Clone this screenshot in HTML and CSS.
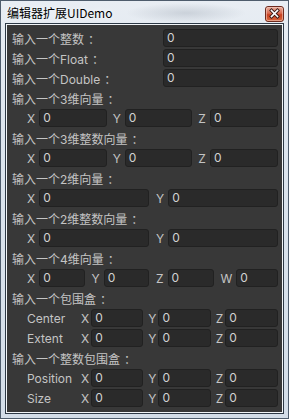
FILE: index.html
```html
<!DOCTYPE html>
<html lang="zh">
<head>
    <meta charset="UTF-8">
    <meta name="viewport" content="width=device-width, initial-scale=1.0">
    <title>编辑器扩展UIDemo</title>
    <link rel="stylesheet" href="styles.css">
</head>
<body>
    <div class="window">
        <!-- Title bar -->
        <div class="titlebar">
            <span class="title">编辑器扩展UIDemo</span>
            <span class="close">
                <svg width="19" height="16" viewBox="0 0 19 16">
                    <defs>
                        <linearGradient id="cg" x1="0" y1="0" x2="0" y2="1">
                            <stop offset="0" stop-color="#eab4a4"/>
                            <stop offset="0.45" stop-color="#d86a50"/>
                            <stop offset="0.55" stop-color="#c8401f"/>
                            <stop offset="1" stop-color="#d86a40"/>
                        </linearGradient>
                    </defs>
                    <rect x="0.5" y="0.5" width="18" height="15" rx="2.5" fill="url(#cg)" stroke="#6e2a1e"/>
                    <rect x="1.5" y="1.5" width="16" height="13" rx="1.5" fill="none" stroke="#f3c9bc" stroke-opacity="0.6"/>
                    <path d="M6.5 4.5 L12.5 10.5 M12.5 4.5 L6.5 10.5" stroke="#3a1a14" stroke-width="3.4" stroke-linecap="square"/>
                    <path d="M6.5 4.5 L12.5 10.5 M12.5 4.5 L6.5 10.5" stroke="#ffffff" stroke-width="1.6" stroke-linecap="square"/>
                </svg>
            </span>
        </div>

        <div class="frame">
            <div class="client">
                <div class="row"><span class="lbl">输入一个整数<span class="colon">：</span></span><span class="field">0</span></div>
                <div class="row"><span class="lbl">输入一个Float<span class="colon">：</span></span><span class="field">0</span></div>
                <div class="row"><span class="lbl">输入一个Double<span class="colon">：</span></span><span class="field">0</span></div>

                <div class="row"><span class="lbl">输入一个3维向量<span class="colon">：</span></span></div>
                <div class="row vec">
                    <div class="grp"><span class="axis">X</span><span class="field">0</span></div>
                    <div class="grp"><span class="axis">Y</span><span class="field">0</span></div>
                    <div class="grp"><span class="axis">Z</span><span class="field">0</span></div>
                </div>

                <div class="row"><span class="lbl">输入一个3维整数向量<span class="colon">：</span></span></div>
                <div class="row vec">
                    <div class="grp"><span class="axis">X</span><span class="field">0</span></div>
                    <div class="grp"><span class="axis">Y</span><span class="field">0</span></div>
                    <div class="grp"><span class="axis">Z</span><span class="field">0</span></div>
                </div>

                <div class="row"><span class="lbl">输入一个2维向量<span class="colon">：</span></span></div>
                <div class="row vec vec2">
                    <div class="grp"><span class="axis">X</span><span class="field">0</span></div>
                    <div class="grp"><span class="axis">Y</span><span class="field">0</span></div>
                </div>

                <div class="row"><span class="lbl">输入一个2维整数向量<span class="colon">：</span></span></div>
                <div class="row vec vec2">
                    <div class="grp"><span class="axis">X</span><span class="field">0</span></div>
                    <div class="grp"><span class="axis">Y</span><span class="field">0</span></div>
                </div>

                <div class="row"><span class="lbl">输入一个4维向量<span class="colon">：</span></span></div>
                <div class="row vec vec4">
                    <div class="grp"><span class="axis">X</span><span class="field">0</span></div>
                    <div class="grp"><span class="axis">Y</span><span class="field">0</span></div>
                    <div class="grp"><span class="axis">Z</span><span class="field">0</span></div>
                    <div class="grp"><span class="axis">W</span><span class="field">0</span></div>
                </div>

                <div class="row"><span class="lbl">输入一个包围盒<span class="colon">：</span></span></div>
                <div class="row bounds">
                    <span class="name">Center</span>
                    <div class="vec">
                        <div class="grp"><span class="axis">X</span><span class="field">0</span></div>
                        <div class="grp"><span class="axis">Y</span><span class="field">0</span></div>
                        <div class="grp"><span class="axis">Z</span><span class="field">0</span></div>
                    </div>
                </div>
                <div class="row bounds">
                    <span class="name">Extent</span>
                    <div class="vec">
                        <div class="grp"><span class="axis">X</span><span class="field">0</span></div>
                        <div class="grp"><span class="axis">Y</span><span class="field">0</span></div>
                        <div class="grp"><span class="axis">Z</span><span class="field">0</span></div>
                    </div>
                </div>

                <div class="row"><span class="lbl">输入一个整数包围盒<span class="colon">：</span></span></div>
                <div class="row bounds">
                    <span class="name">Position</span>
                    <div class="vec">
                        <div class="grp"><span class="axis">X</span><span class="field">0</span></div>
                        <div class="grp"><span class="axis">Y</span><span class="field">0</span></div>
                        <div class="grp"><span class="axis">Z</span><span class="field">0</span></div>
                    </div>
                </div>
                <div class="row bounds">
                    <span class="name">Size</span>
                    <div class="vec">
                        <div class="grp"><span class="axis">X</span><span class="field">0</span></div>
                        <div class="grp"><span class="axis">Y</span><span class="field">0</span></div>
                        <div class="grp"><span class="axis">Z</span><span class="field">0</span></div>
                    </div>
                </div>
            </div>
        </div>
    </div>
</body>
</html>
```

FILE: styles.css
```css
/* Page */
html, body {
    margin: 0;
    padding: 0;
}

body {
    width: 289px;
    height: 419px;
    overflow: hidden;
}

/* Window frame */
.window {
    box-sizing: border-box;
    width: 289px;
    height: 419px;
    border: 1px solid #4e5c6c;
    background: linear-gradient(to bottom, #e8edf3 0%, #dde5ee 30%, #d3dde8 100%);
    display: flex;
    flex-direction: column;
}

.titlebar {
    height: 22px;
    display: flex;
    align-items: center;
    justify-content: space-between;
    padding: 0 4px 0 6px;
    background: radial-gradient(ellipse 60px 10px at 185px 12px, rgba(150, 160, 172, 0.35), transparent);
}

.title {
    font-family: "Noto Sans CJK SC", "Noto Sans", sans-serif;
    font-size: 12px;
    color: #000;
    text-shadow: 0 0 6px rgba(255, 255, 255, 0.9);
}

.close {
    display: flex;
    margin-top: 4px;
}

.frame {
    flex: 1;
    margin: 0 4px 4px 4px;
    border: 1px solid #2d3946;
    display: flex;
}

.client {
    flex: 1;
    border: 1px solid #f2f5f8;
    background-color: #383838;
    padding: 4px 4px 3px 5px;
    display: flex;
    flex-direction: column;
    gap: 2px;
    font-family: "Inter", "Noto Sans CJK SC", sans-serif;
    font-size: 12px;
    color: #c4c4c4;
}

/* Rows */
.row {
    height: 18px;
    display: flex;
    align-items: center;
}

.lbl {
    width: 151px;
    flex: none;
    white-space: nowrap;
}

/* centred full-width colon, as the editor font draws it */
.colon {
    display: inline-block;
    width: 12px;
    padding-left: 4px;
}

.field {
    flex: 1;
    box-sizing: border-box;
    height: 18px;
    line-height: 16px;
    padding-left: 3px;
    background-color: #2a2a2a;
    border: 1px solid #212121;
    border-radius: 3px;
    color: #d2d2d2;
    min-width: 0;
}

/* Vector fields */
.vec {
    display: grid;
    grid-template-columns: repeat(3, 1fr);
    column-gap: 6px;
    padding-left: 15px;
}

.vec2 {
    grid-template-columns: repeat(2, 1fr);
    column-gap: 7px;
}

.vec4 {
    grid-template-columns: repeat(4, 1fr);
    column-gap: 7px;
}

.grp {
    display: flex;
    align-items: center;
    min-width: 0;
}

.axis {
    padding-right: 4px;
}

/* Bounds */
.bounds {
    padding-left: 15px;
}

.bounds .name {
    width: 54px;
    flex: none;
}

.bounds .vec {
    flex: 1;
    padding-left: 0;
    column-gap: 5px;
}

.bounds .axis {
    padding-right: 2px;
}
```
